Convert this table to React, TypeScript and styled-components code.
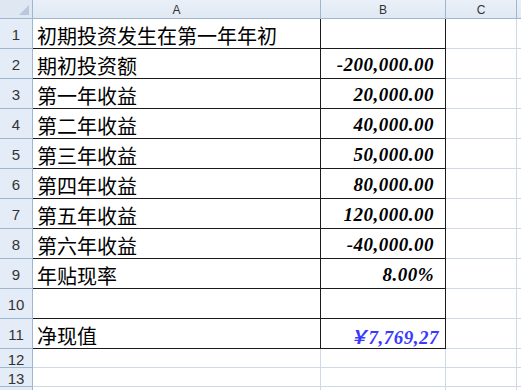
import React from 'react';
import styled, { createGlobalStyle } from 'styled-components';

const GlobalStyle = createGlobalStyle`
  html, body {
    margin: 0;
    padding: 0;
    background: #ffffff;
    overflow: hidden;
  }
`;

const Sheet = styled.div`
  display: grid;
  grid-template-columns: 33px 288px 125px 71px 1fr;
  grid-template-rows: 19px repeat(11, 30px) repeat(3, 19px);
  width: 521px;
  height: 390px;
  overflow: hidden;
  background: #ffffff;
`;

const Corner = styled.div`
  position: relative;
  box-sizing: border-box;
  background: #dfe7f2;
  border-right: 1px solid #9eb6ce;
  border-bottom: 1px solid #9eb6ce;

  &::after {
    content: '';
    position: absolute;
    right: 3px;
    bottom: 3px;
    width: 0;
    height: 0;
    border-left: 10px solid transparent;
    border-bottom: 10px solid #b9c9db;
  }
`;

const ColHeader = styled.div`
  box-sizing: border-box;
  display: flex;
  align-items: center;
  justify-content: center;
  background: linear-gradient(#eaf0f8, #dfe8f3);
  border-right: 1px solid #9eb6ce;
  border-bottom: 1px solid #9eb6ce;
  font-family: 'Liberation Sans', sans-serif;
  font-size: 12px;
  color: #333333;
  padding-top: 1px;
`;

const RowHeader = styled.div`
  box-sizing: border-box;
  display: flex;
  align-items: center;
  justify-content: center;
  background: #e4ecf7;
  border-right: 1px solid #9eb6ce;
  border-bottom: 1px solid #9eb6ce;
  font-family: 'Liberation Sans', sans-serif;
  font-size: 15px;
  color: #333333;
  padding-top: 2px;
`;

const Cell = styled.div<{ $boxed?: boolean; $num?: boolean; $blue?: boolean }>`
  box-sizing: border-box;
  display: flex;
  align-items: center;
  justify-content: ${(p) => (p.$num ? 'flex-end' : 'flex-start')};
  padding: ${(p) => (p.$blue ? '3px 6px 0 0' : p.$num ? '3px 11px 0 0' : '3px 0 0 4px')};
  border-right: 1px solid ${(p) => (p.$boxed ? '#1a1a1a' : '#d0d7e5')};
  border-bottom: 1px solid ${(p) => (p.$boxed ? '#1a1a1a' : '#d0d7e5')};
  white-space: nowrap;
  overflow: visible;
  color: ${(p) => (p.$blue ? '#3a3aff' : '#000000')};
  font-family: ${(p) =>
    p.$num
      ? "'Liberation Serif', 'Noto Sans CJK SC', serif"
      : "'Noto Sans CJK SC', sans-serif"};
  font-size: ${(p) => (p.$num ? '19px' : '20px')};
  letter-spacing: ${(p) => (p.$num ? '0.5px' : '0')};
  font-weight: ${(p) => (p.$num ? 700 : 400)};
  font-style: ${(p) => (p.$num ? 'italic' : 'normal')};
`;

const rows: [string, string, boolean?][] = [
  ['初期投资发生在第一年年初', ''],
  ['期初投资额', '-200,000.00'],
  ['第一年收益', '20,000.00'],
  ['第二年收益', '40,000.00'],
  ['第三年收益', '50,000.00'],
  ['第四年收益', '80,000.00'],
  ['第五年收益', '120,000.00'],
  ['第六年收益', '-40,000.00'],
  ['年贴现率', '8.00%'],
  ['', ''],
  ['净现值', '￥7,769,27', true],
];

const App = () => (
  <>
    <GlobalStyle />
    <Sheet>
      <Corner />
      <ColHeader>A</ColHeader>
      <ColHeader>B</ColHeader>
      <ColHeader>C</ColHeader>
      <ColHeader />
      {rows.map(([label, value, blue], i) => (
        <React.Fragment key={i}>
          <RowHeader>{i + 1}</RowHeader>
          <Cell $boxed>{label}</Cell>
          <Cell $boxed $num $blue={blue}>
            {value}
          </Cell>
          <Cell />
          <Cell />
        </React.Fragment>
      ))}
      {[12, 13].map((n) => (
        <React.Fragment key={n}>
          <RowHeader>{n}</RowHeader>
          <Cell />
          <Cell />
          <Cell />
          <Cell />
        </React.Fragment>
      ))}
      <RowHeader />
      <Cell />
      <Cell />
      <Cell />
      <Cell />
    </Sheet>
  </>
);

export default App;
